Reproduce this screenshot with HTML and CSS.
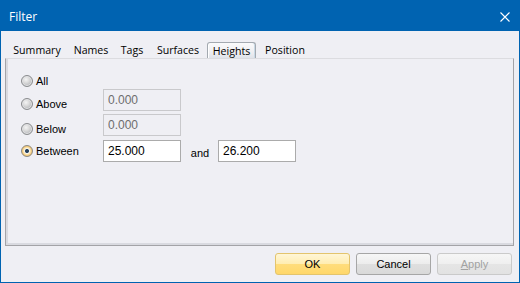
FILE: index.html
```html
<!DOCTYPE html>
<html lang="en">
<head>
  <meta charset="UTF-8">
  <title>Filter</title>
  <link rel="stylesheet" href="styles.css">
</head>
<body>

<div class="window">
  <div class="titlebar">
    <span class="title">Filter</span>
    <span class="close">
      <svg width="10" height="10" viewBox="0 0 10 10"><path d="M0.5 0.5 L9.5 9.5 M9.5 0.5 L0.5 9.5" stroke="#fff" stroke-width="1.1" fill="none"/></svg>
    </span>
  </div>

  <div class="tabs">
    <span class="tab t-summary">Summary</span>
    <span class="tab t-names">Names</span>
    <span class="tab t-tags">Tags</span>
    <span class="tab t-surfaces">Surfaces</span>
    <span class="tab t-heights active">Heights</span>
    <span class="tab t-position">Position</span>
  </div>

  <div class="panel">
    <div class="options">
      <label class="opt r1"><span class="radio"></span>All</label>

      <label class="opt r2 low"><span class="radio"></span>Above</label>
      <input class="field r2 disabled" type="text" value="0.000" disabled>

      <label class="opt r3 low"><span class="radio"></span>Below</label>
      <input class="field r3 disabled" type="text" value="0.000" disabled>

      <label class="opt r4"><span class="radio checked"></span>Between</label>
      <input class="field r4" type="text" value="25.000">
      <span class="and r4">and</span>
      <input class="field r4 second" type="text" value="26.200">
    </div>
  </div>

  <div class="buttons">
    <button class="btn ok">OK</button>
    <button class="btn">Cancel</button>
    <button class="btn off"><u>A</u>pply</button>
  </div>
</div>

</body>
</html>
```

FILE: styles.css
```css
body {
  margin: 0;
  padding: 0;
  background: #efeff4;
}
.window {
  width: 520px;
  height: 283px;
  box-sizing: border-box;
  border: 1px solid #0063b1;
  background: #efeff4;
  display: flex;
  flex-direction: column;
  font-family: "Liberation Sans", Arial, sans-serif;
}
.titlebar {
  height: 30px;
  background: #0063b1;
  color: #fff;
  display: flex;
  align-items: center;
  justify-content: space-between;
  padding: 0 9px 0 8px;
}
.title {
  font-family: "Open Sans", sans-serif;
  font-size: 12px;
  margin-top: 1px;
}
.close {
  display: flex;
  margin-top: 1px;
}
.tabs {
  display: flex;
  height: 16px;
  margin: 11px 0 0 5px;
  font-family: "Open Sans", sans-serif;
  font-size: 10.6px;
  color: #000;
}
.tab {
  display: flex;
  align-items: center;
  justify-content: center;
  height: 16px;
  box-sizing: border-box;
}
.t-summary { width: 62px; }
.t-names { width: 46px; }
.t-tags { width: 36px; }
.t-surfaces { width: 56px; }
.t-heights { width: 49px; margin-left: 1px; }
.t-position { width: 58px; }
.tab.active {
  border: 1px solid #a3a9b0;
  border-bottom: none;
  border-radius: 3px 3px 0 0;
  background: linear-gradient(#fbfbfc, #ececf0 70%, #dfe3ea);
  box-shadow: inset 1px 0 0 #fff, inset -1px 0 0 #c9d9e6;
}
.panel {
  height: 188px;
  box-sizing: border-box;
  margin: 0 5px 0 4px;
  border: 1px solid #a3a3a7;
  border-top-color: #dcdce0;
  box-shadow: inset 2px -2px 0 #d9dae0;
  padding: 14px 0 0 15px;
}
.options {
  display: grid;
  grid-template-columns: 82px 78px 37px 78px;
  grid-template-rows: 16px 25px 26px 22px;
  font-size: 11px;
}
.r1 { grid-row: 1; }
.r2 { grid-row: 2; }
.r3 { grid-row: 3; }
.r4 { grid-row: 4; }
.opt {
  grid-column: 1;
  display: flex;
  align-items: center;
  gap: 3px;
  align-self: center;
  color: #000;
}
.opt.low {
  margin-top: 4px;
}
.radio {
  width: 12px;
  height: 12px;
  box-sizing: border-box;
  border-radius: 50%;
  border: 1px solid #8a8c8e;
  background: radial-gradient(circle at 40% 35%, #f4f4f4 0, #dcdcdc 3px, #c2c3c5 5.5px);
  box-shadow: inset 0 0 0 1px #e4e4e6;
}
.radio.checked {
  border-color: #8d8a84;
  background: radial-gradient(circle, #29384a 0, #2f4b68 1.6px, #f6f6f6 2.4px, #fbe7b6 3.2px, #f0c06a 5px);
  box-shadow: none;
}
.field {
  grid-column: 2;
  align-self: start;
  width: 78px;
  height: 22px;
  box-sizing: border-box;
  margin: 0;
  padding: 0 0 1px 4px;
  border: 1px solid #ababab;
  background: #fff;
  font-family: "Liberation Sans", Arial, sans-serif;
  font-size: 12px;
  color: #000;
  outline: none;
}
.field.disabled {
  background: #efeff4;
  border-color: #c9c9cc;
  color: #6d6d6d;
}
.field.second {
  grid-column: 4;
}
.and {
  grid-column: 3;
  align-self: center;
  justify-self: center;
  margin-top: 3px;
  margin-left: 1px;
}
.buttons {
  display: flex;
  justify-content: flex-end;
  gap: 6px;
  margin-top: 7px;
  padding-right: 7px;
}
.btn {
  width: 75px;
  height: 22px;
  box-sizing: border-box;
  border: 1px solid #a6a6a6;
  border-radius: 3px;
  background: linear-gradient(#f7f7f7, #ececec 50%, #dfdfdf 51%, #d9d9d9);
  font-family: "Liberation Sans", Arial, sans-serif;
  font-size: 11px;
  color: #000;
  padding: 0;
}
.btn.ok {
  border-color: #e3c46d;
  background: linear-gradient(#fff6d6, #ffedb1 50%, #ffdd7c 51%, #ffd76a);
}
.btn.off {
  border-color: #cacaca;
  background: linear-gradient(#f6f6f6, #efefef 50%, #e5e5e5 51%, #e2e2e2);
  color: #a2a2a2;
}
```
